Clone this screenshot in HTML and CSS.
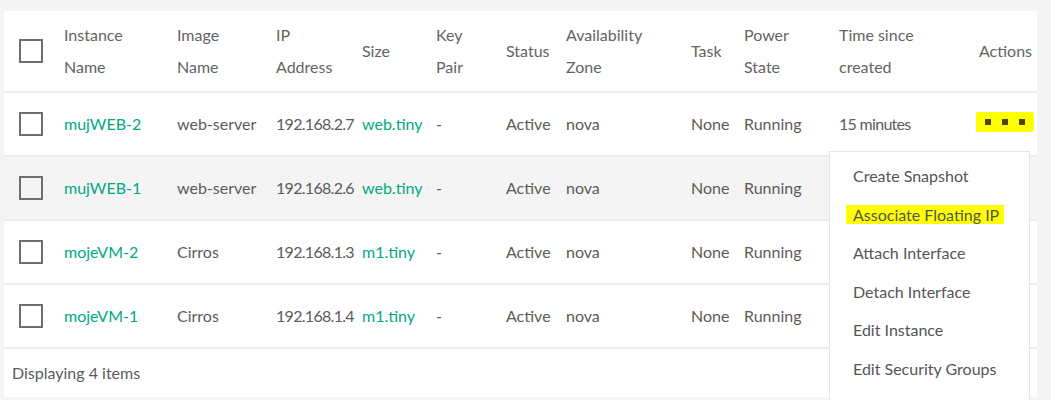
FILE: index.html
```html
<!DOCTYPE html>
<html lang="en">
<head>
  <meta charset="UTF-8">
  <meta name="viewport" content="width=device-width, initial-scale=1.0">
  <title>Instances</title>
  <link rel="stylesheet" href="styles.css">
</head>
<body>
  <main class="page">
    <div class="card">

      <table class="instances">
        <colgroup>
          <col class="c-check">
          <col class="c-name">
          <col class="c-image">
          <col class="c-ip">
          <col class="c-size">
          <col class="c-key">
          <col class="c-status">
          <col class="c-zone">
          <col class="c-task">
          <col class="c-power">
          <col class="c-time">
          <col class="c-actions">
        </colgroup>
        <thead>
          <tr>
            <th><span class="box"></span></th>
            <th>Instance<br>Name</th>
            <th>Image<br>Name</th>
            <th>IP<br>Address</th>
            <th>Size</th>
            <th>Key<br>Pair</th>
            <th>Status</th>
            <th>Availability<br>Zone</th>
            <th>Task</th>
            <th>Power<br>State</th>
            <th>Time since<br>created</th>
            <th>Actions</th>
          </tr>
        </thead>
        <tbody>
          <tr>
            <td><span class="box"></span></td>
            <td><a href="#">mujWEB-2</a></td>
            <td>web-server</td>
            <td class="num">192.168.2.7</td>
            <td><a href="#">web.tiny</a></td>
            <td>-</td>
            <td>Active</td>
            <td>nova</td>
            <td>None</td>
            <td>Running</td>
            <td class="num">15 minutes</td>
            <td><span class="kebab"><i></i><i></i><i></i></span></td>
          </tr>
          <tr class="alt">
            <td><span class="box"></span></td>
            <td><a href="#">mujWEB-1</a></td>
            <td>web-server</td>
            <td class="num">192.168.2.6</td>
            <td><a href="#">web.tiny</a></td>
            <td>-</td>
            <td>Active</td>
            <td>nova</td>
            <td>None</td>
            <td>Running</td>
            <td></td>
            <td></td>
          </tr>
          <tr>
            <td><span class="box"></span></td>
            <td><a href="#">mojeVM-2</a></td>
            <td>Cirros</td>
            <td class="num">192.168.1.3</td>
            <td><a href="#">m1.tiny</a></td>
            <td>-</td>
            <td>Active</td>
            <td>nova</td>
            <td>None</td>
            <td>Running</td>
            <td></td>
            <td></td>
          </tr>
          <tr>
            <td><span class="box"></span></td>
            <td><a href="#">mojeVM-1</a></td>
            <td>Cirros</td>
            <td class="num">192.168.1.4</td>
            <td><a href="#">m1.tiny</a></td>
            <td>-</td>
            <td>Active</td>
            <td>nova</td>
            <td>None</td>
            <td>Running</td>
            <td></td>
            <td></td>
          </tr>
        </tbody>
      </table>

      <div class="footer">Displaying 4 items</div>

      <ul class="menu">
        <li>Create Snapshot</li>
        <li><span class="mark">Associate Floating IP</span></li>
        <li>Attach Interface</li>
        <li>Detach Interface</li>
        <li>Edit Instance</li>
        <li>Edit Security Groups</li>
      </ul>

    </div>
  </main>
</body>
</html>
```

FILE: styles.css
```css
html, body{
  margin: 0;
  padding: 0;
  overflow: hidden;
}

body{
  background-color: #f4f4f4;
  font-family: Lato, "Open Sans", sans-serif;
  font-size: 16px;
  color: #5b5b5b;
}

.page{
  box-sizing: border-box;
  height: 400px;
  padding: 11px 14px 0 4px;
  overflow: hidden;
}

.card{
  position: relative;
  background-color: white;
}

.instances{
  width: 100%;
  table-layout: fixed;
  border-collapse: separate;
  border-spacing: 0;
}

.c-check{ width: 60px; }
.c-name{ width: 113px; }
.c-image{ width: 99px; }
.c-ip{ width: 86px; }
.c-size{ width: 74px; }
.c-key{ width: 70px; }
.c-status{ width: 60px; }
.c-zone{ width: 125px; }
.c-task{ width: 53px; }
.c-power{ width: 95px; }
.c-time{ width: 140px; }
.c-actions{ width: 58px; }

th{
  padding: 8px 0;
  line-height: 32px;
  font-weight: normal;
  text-align: left;
  color: #646464;
  vertical-align: middle;
  border-bottom: 2px solid #ececec;
  white-space: nowrap;
}

td{
  height: 24px;
  padding: 19px 0;
  line-height: 24px;
  vertical-align: middle;
  border-bottom: 2px solid #ececec;
  white-space: nowrap;
}

td.num{
  letter-spacing: -0.7px;
}

tr.alt td{
  background-color: #f4f4f4;
}

a{
  color: #01a982;
  text-decoration: none;
}

.box{
  display: block;
  box-sizing: border-box;
  width: 24px;
  height: 24px;
  margin-left: 15px;
  border: 2px solid #6e6e6e;
}

/* the yellow marks are someone's highlighter on the screenshot */
.kebab{
  display: flex;
  gap: 11px;
  width: 40px;
  margin: -5px 0 0 -3px;
  padding: 7px 9px;
  background-color: #ffff00;
  border-radius: 2px 2px 4px 2px;
}
.kebab i{
  display: block;
  width: 6px;
  height: 6px;
  background-color: #4b4700;
}

.footer{
  padding: 12px 8px;
  line-height: 24px;
}

.menu{
  position: absolute;
  top: 140px;
  left: 825px;
  width: 199px;
  margin: 0;
  padding: 5px 0 40px;
  list-style: none;
  background-color: white;
  border: 1px solid #e6e6e6;
  color: #555;
}
.menu li{
  padding: 0 23px;
  line-height: 38.5px;
  white-space: nowrap;
}

.mark{
  margin: 0 -5px 0 -7px;
  padding: 0 5px 0 7px;
  background-color: #ffff00;
}
```
